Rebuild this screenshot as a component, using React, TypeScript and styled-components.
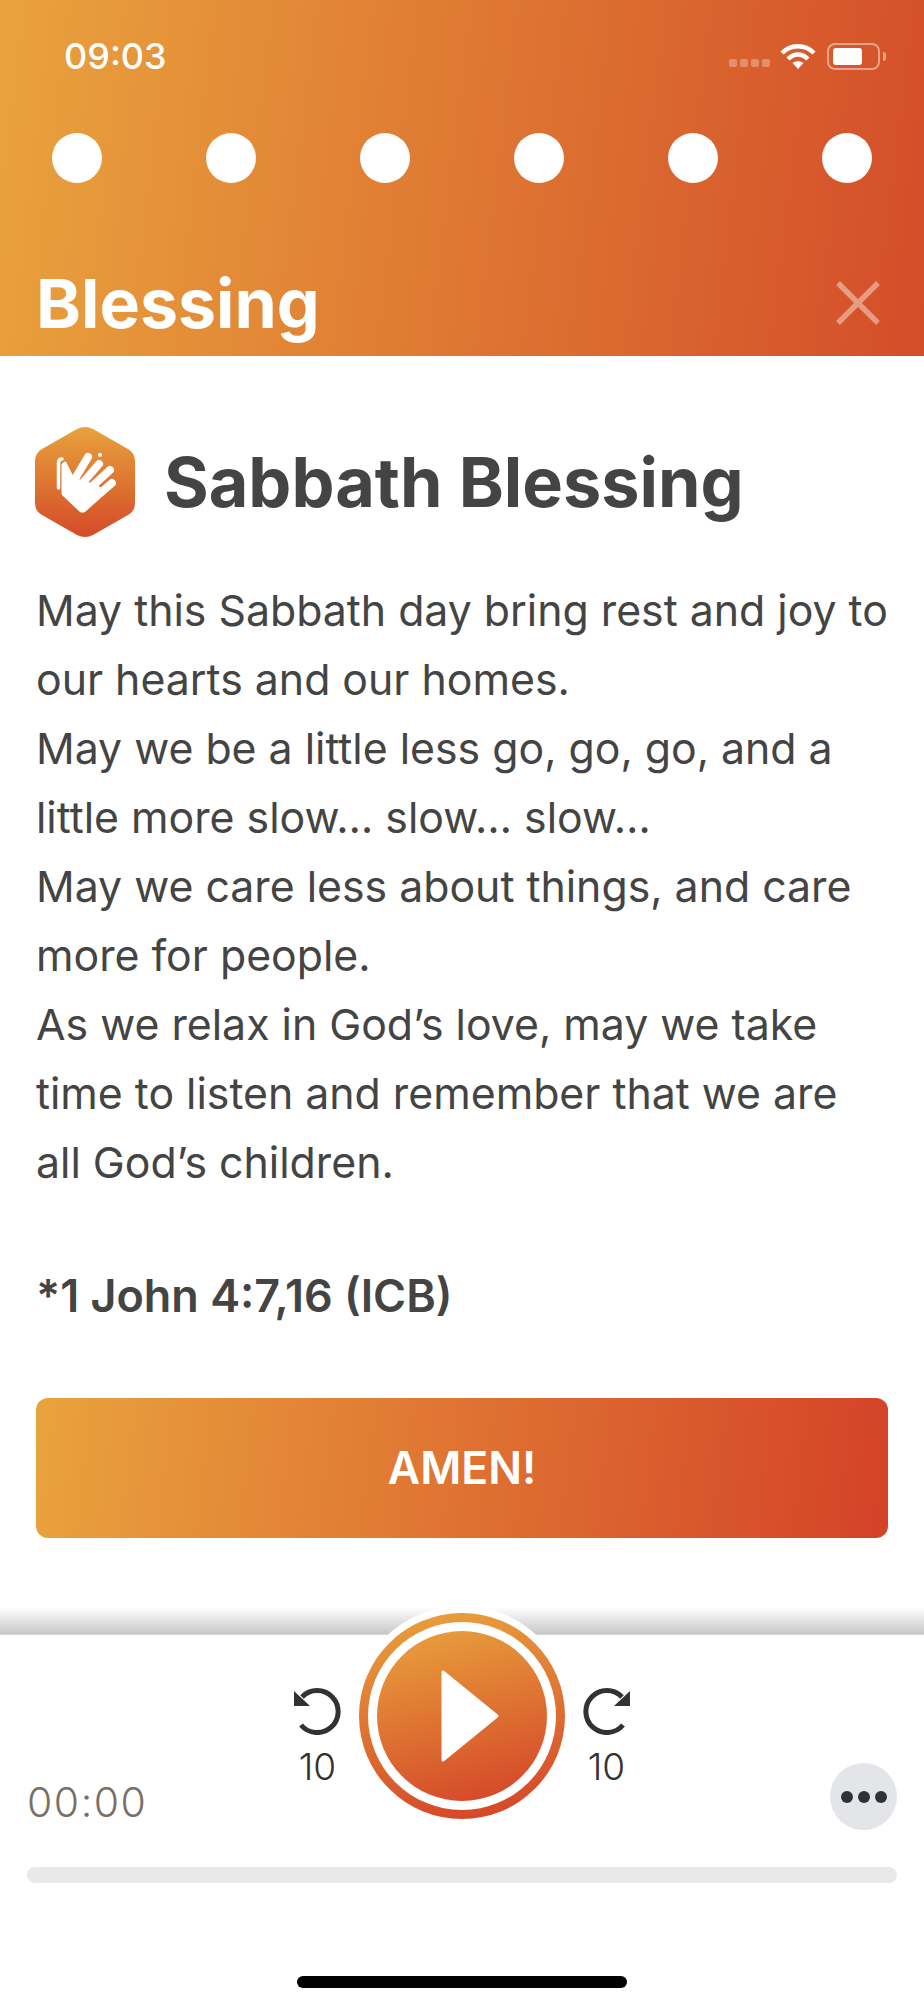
import React from "react";
import styled, { createGlobalStyle } from "styled-components";

const GlobalStyle = createGlobalStyle`
  html, body { margin: 0; padding: 0; background: #fff; }
  * { box-sizing: border-box; }
`;

const App = () => {
  return (
    <Page>
      <GlobalStyle />
      <Header>
        <StatusBar>
          <Clock>09:03</Clock>
          <StatusIcons>
            <Signal>
              <SignalDot /><SignalDot /><SignalDot /><SignalDot />
            </Signal>
            <svg width="36" height="25" viewBox="0 0 36 25">
              <g fill="none" stroke="#fff" strokeWidth="4.4">
                <path d="M2 9 C11 0 25 0 34 9" />
                <path d="M8 15 C14 9 22 9 28 15" />
              </g>
              <path d="M12.500 19 C16 16.500 20 16.500 23.500 19 L18 25 Z" fill="#fff" />
            </svg>
            <Battery>
              <BatteryFill />
            </Battery>
            <BatteryCap />
          </StatusIcons>
        </StatusBar>
        <Dots>
          {[0, 1, 2, 3, 4, 5].map((i) => (
            <Dot key={i} />
          ))}
        </Dots>
        <TitleBar>
          <ScreenTitle>Blessing</ScreenTitle>
          <svg width="44" height="44" viewBox="0 0 44 44">
            <path d="M2 2 L42 42 M42 2 L2 42" stroke="#fff" strokeOpacity="0.42" strokeWidth="5.500" />
          </svg>
        </TitleBar>
      </Header>
      <Content>
        <HeadingRow>
          <HandBadge />
          <Heading>Sabbath Blessing</Heading>
        </HeadingRow>
        <Paragraph>
          May this Sabbath day bring rest and joy to our hearts and our homes.
          <br />
          May we be a little less go, go, go, and a little more slow… slow… slow…
          <br />
          May we care less about things, and care more for people.
          <br />
          As we relax in God’s love, may we take time to listen and remember that we are all God’s children.
        </Paragraph>
        <Reference>*1 John 4:7,16 (ICB)</Reference>
        <AmenButton>AMEN!</AmenButton>
      </Content>
      <PlayerShadow />
      <Player>
        <PlayerRow>
          <Time>00:00</Time>
          <Controls>
            <SkipButton>
              <SkipIcon />
              <SkipLabel>10</SkipLabel>
            </SkipButton>
            <PlayHalo>
              <PlayRing>
                <PlayGap>
                  <PlayCore>
                    <svg width="60" height="94" viewBox="0 0 60 94">
                      <path d="M3 3 L57 47 L3 91 Z" fill="#fff" stroke="#fff" strokeWidth="3" strokeLinejoin="round" />
                    </svg>
                  </PlayCore>
                </PlayGap>
              </PlayRing>
            </PlayHalo>
            <SkipButton>
              <SkipIcon $forward />
              <SkipLabel>10</SkipLabel>
            </SkipButton>
          </Controls>
          <MoreButton>
            <MoreDot /><MoreDot /><MoreDot />
          </MoreButton>
        </PlayerRow>
        <Progress />
        <HomeBar />
      </Player>
    </Page>
  );
};

export default App;

const HandBadge = () => (
  <svg width="102" height="112" viewBox="0 0 102 112">
    <defs>
      <linearGradient id="badge" x1="0" y1="0" x2="0" y2="1">
        <stop offset="0" stopColor="#E8A23C" />
        <stop offset="1" stopColor="#D44A28" />
      </linearGradient>
    </defs>
    <path
      d="M43 3 Q51 -1 59 3 L94 23 Q101 27 101 35 L101 77 Q101 85 94 89 L59 109 Q51 113 43 109 L8 89 Q1 85 1 77 L1 35 Q1 27 8 23 Z"
      fill="url(#badge)"
    />
    <path
      d="M28 33 C25 33 24.500 35 24.500 37 L24.500 62"
      fill="none"
      stroke="#fff"
      strokeWidth="3.500"
      strokeLinecap="round"
    />
    <path
      d="M31 37 L39 53 L62 60 L71 66 L50 85 L47 85 L29 68 L29 39 Z"
      fill="#fff"
      stroke="#fff"
      strokeWidth="3"
      strokeLinejoin="round"
    />
    <g fill="none" stroke="#fff" strokeWidth="8" strokeLinecap="round">
      <path d="M38 58 L54 31" />
      <path d="M46 60 L65 38" />
      <path d="M52 66 L76 44" />
      <path d="M58 74 L78 57" />
    </g>
    <circle cx="66" cy="29" r="2" fill="#fff" />
  </svg>
);

const SkipSvg = styled.svg<{ $forward?: boolean }>`
  display: block;
  transform: ${({ $forward }) => ($forward ? "scaleX(-1)" : "none")};
`;

const SkipIcon = ({ $forward }: { $forward?: boolean }) => (
  <SkipSvg $forward={$forward} width="47" height="47" viewBox="0 0 47 47">
    <path d="M7 37 A21 21 0 1 0 8 9" fill="none" stroke="#35312e" strokeWidth="5" />
    <path d="M0 3 L0 18 L16 18 Z" fill="#35312e" />
  </SkipSvg>
);

const Page = styled.div`
  width: 924px;
  height: 2000px;
  display: flex;
  flex-direction: column;
  overflow: hidden;
  font-family: Inter, "Liberation Sans", sans-serif;
  background: #fff;
`;
const Header = styled.header`
  height: 356px;
  flex: none;
  display: flex;
  flex-direction: column;
  padding: 36px 36px 0;
  background: linear-gradient(97deg, #e9a33d 0%, #d44d29 100%);
  color: #fff;
`;
const StatusBar = styled.div`
  height: 40px;
  display: flex;
  align-items: center;
  justify-content: space-between;
  padding: 0 2px 0 28px;
`;
const Clock = styled.span`
  font-size: 36px;
  font-weight: 500;
`;
const StatusIcons = styled.div`
  display: flex;
  align-items: center;
`;
const Signal = styled.div`
  display: flex;
  gap: 3px;
  margin: 14px 10px 0 0;
`;
const SignalDot = styled.span`
  width: 8px;
  height: 8px;
  border-radius: 2px;
  background: rgba(255, 255, 255, 0.3);
`;
const Battery = styled.div`
  width: 53px;
  height: 27px;
  margin-left: 11px;
  padding: 3px 4px;
  border: 2px solid rgba(255, 255, 255, 0.45);
  border-radius: 8px;
`;
const BatteryFill = styled.div`
  width: 29px;
  height: 100%;
  background: #fff;
  border-radius: 3px;
`;
const BatteryCap = styled.span`
  width: 3px;
  height: 9px;
  margin-left: 3px;
  background: rgba(255, 255, 255, 0.45);
  border-radius: 0 3px 3px 0;
`;
const Dots = styled.div`
  display: flex;
  justify-content: space-between;
  padding: 0 16px;
  margin-top: 57px;
`;
const Dot = styled.span`
  width: 50px;
  height: 50px;
  border-radius: 50%;
  background: #fff;
`;
const TitleBar = styled.div`
  display: flex;
  align-items: center;
  justify-content: space-between;
  margin-top: 82px;
  padding-right: 8px;
`;
const ScreenTitle = styled.h1`
  margin: 0;
  font-size: 68px;
  line-height: 76px;
  font-weight: 700;
`;
const Content = styled.main`
  flex: 1;
  display: flex;
  flex-direction: column;
  padding: 70px 36px 0;
  color: #444;
`;
const HeadingRow = styled.div`
  display: flex;
  align-items: center;
  gap: 28px;
  margin-left: -2px;
`;
const Heading = styled.h2`
  margin: 0;
  font-size: 68.300px;
  font-weight: 700;
  line-height: 76px;
`;
const Paragraph = styled.p`
  margin: 38px 0 0;
  font-size: 42.800px;
  line-height: 69px;
  font-weight: 400;
`;
const Reference = styled.p`
  margin: 65px 0 0;
  font-size: 44.900px;
  line-height: 69px;
  font-weight: 600;
`;
const AmenButton = styled.button`
  margin-top: 67px;
  height: 140px;
  border: 0;
  border-radius: 12px;
  background: linear-gradient(97deg, #e9a33d 0%, #d44228 100%);
  color: #fff;
  font-family: inherit;
  font-size: 44.500px;
  font-weight: 600;
`;
const PlayerShadow = styled.div`
  height: 27px;
  flex: none;
  background: linear-gradient(180deg, rgba(190, 190, 190, 0) 0%, #c8c8c8 100%);
`;
const Player = styled.section`
  height: 366px;
  flex: none;
  display: flex;
  flex-direction: column;
  padding: 0 27px;
  border-top: 1px solid #d4d4d4;
`;
const PlayerRow = styled.div`
  height: 195px;
  display: grid;
  grid-template-columns: 1fr auto 1fr;
  align-items: end;
`;
const Time = styled.span`
  font-size: 41px;
  font-weight: 300;
  line-height: 48px;
  letter-spacing: 1.500px;
  color: #7a6f67;
  margin-bottom: 4px;
`;
const Controls = styled.div`
  display: flex;
  align-items: flex-start;
  gap: 11px;
  align-self: start;
  margin-top: -29px;
`;
const SkipButton = styled.div`
  display: flex;
  flex-direction: column;
  align-items: center;
  padding-top: 82px;
`;
const SkipLabel = styled.span`
  margin-top: 9px;
  font-size: 37px;
  font-weight: 300;
  line-height: 46px;
  color: #35312e;
`;
const PlayHalo = styled.div`
  width: 220px;
  height: 220px;
  padding: 7px;
  border-radius: 50%;
  background: #fff;
`;
const PlayRing = styled.div`
  width: 206px;
  height: 206px;
  padding: 9px;
  border-radius: 50%;
  background: linear-gradient(170deg, #e9a33d 0%, #d44228 100%);
`;
const PlayGap = styled.div`
  width: 100%;
  height: 100%;
  padding: 9px;
  border-radius: 50%;
  background: #fff;
`;
const PlayCore = styled.div`
  width: 100%;
  height: 100%;
  display: flex;
  align-items: center;
  justify-content: center;
  padding-left: 16px;
  border-radius: 50%;
  background: linear-gradient(165deg, #e9a33d 0%, #d44228 100%);
`;
const MoreButton = styled.div`
  justify-self: end;
  width: 67px;
  height: 67px;
  display: flex;
  align-items: center;
  justify-content: center;
  gap: 5px;
  border-radius: 50%;
  background: #e4e5e9;
`;
const MoreDot = styled.span`
  width: 12px;
  height: 12px;
  border-radius: 50%;
  background: #2e3238;
`;
const Progress = styled.div`
  height: 16px;
  margin-top: 37px;
  border-radius: 8px;
  background: #e9e9e9;
`;
const HomeBar = styled.div`
  width: 330px;
  height: 12px;
  margin: 93px auto 0;
  border-radius: 6px;
  background: #000;
`;
